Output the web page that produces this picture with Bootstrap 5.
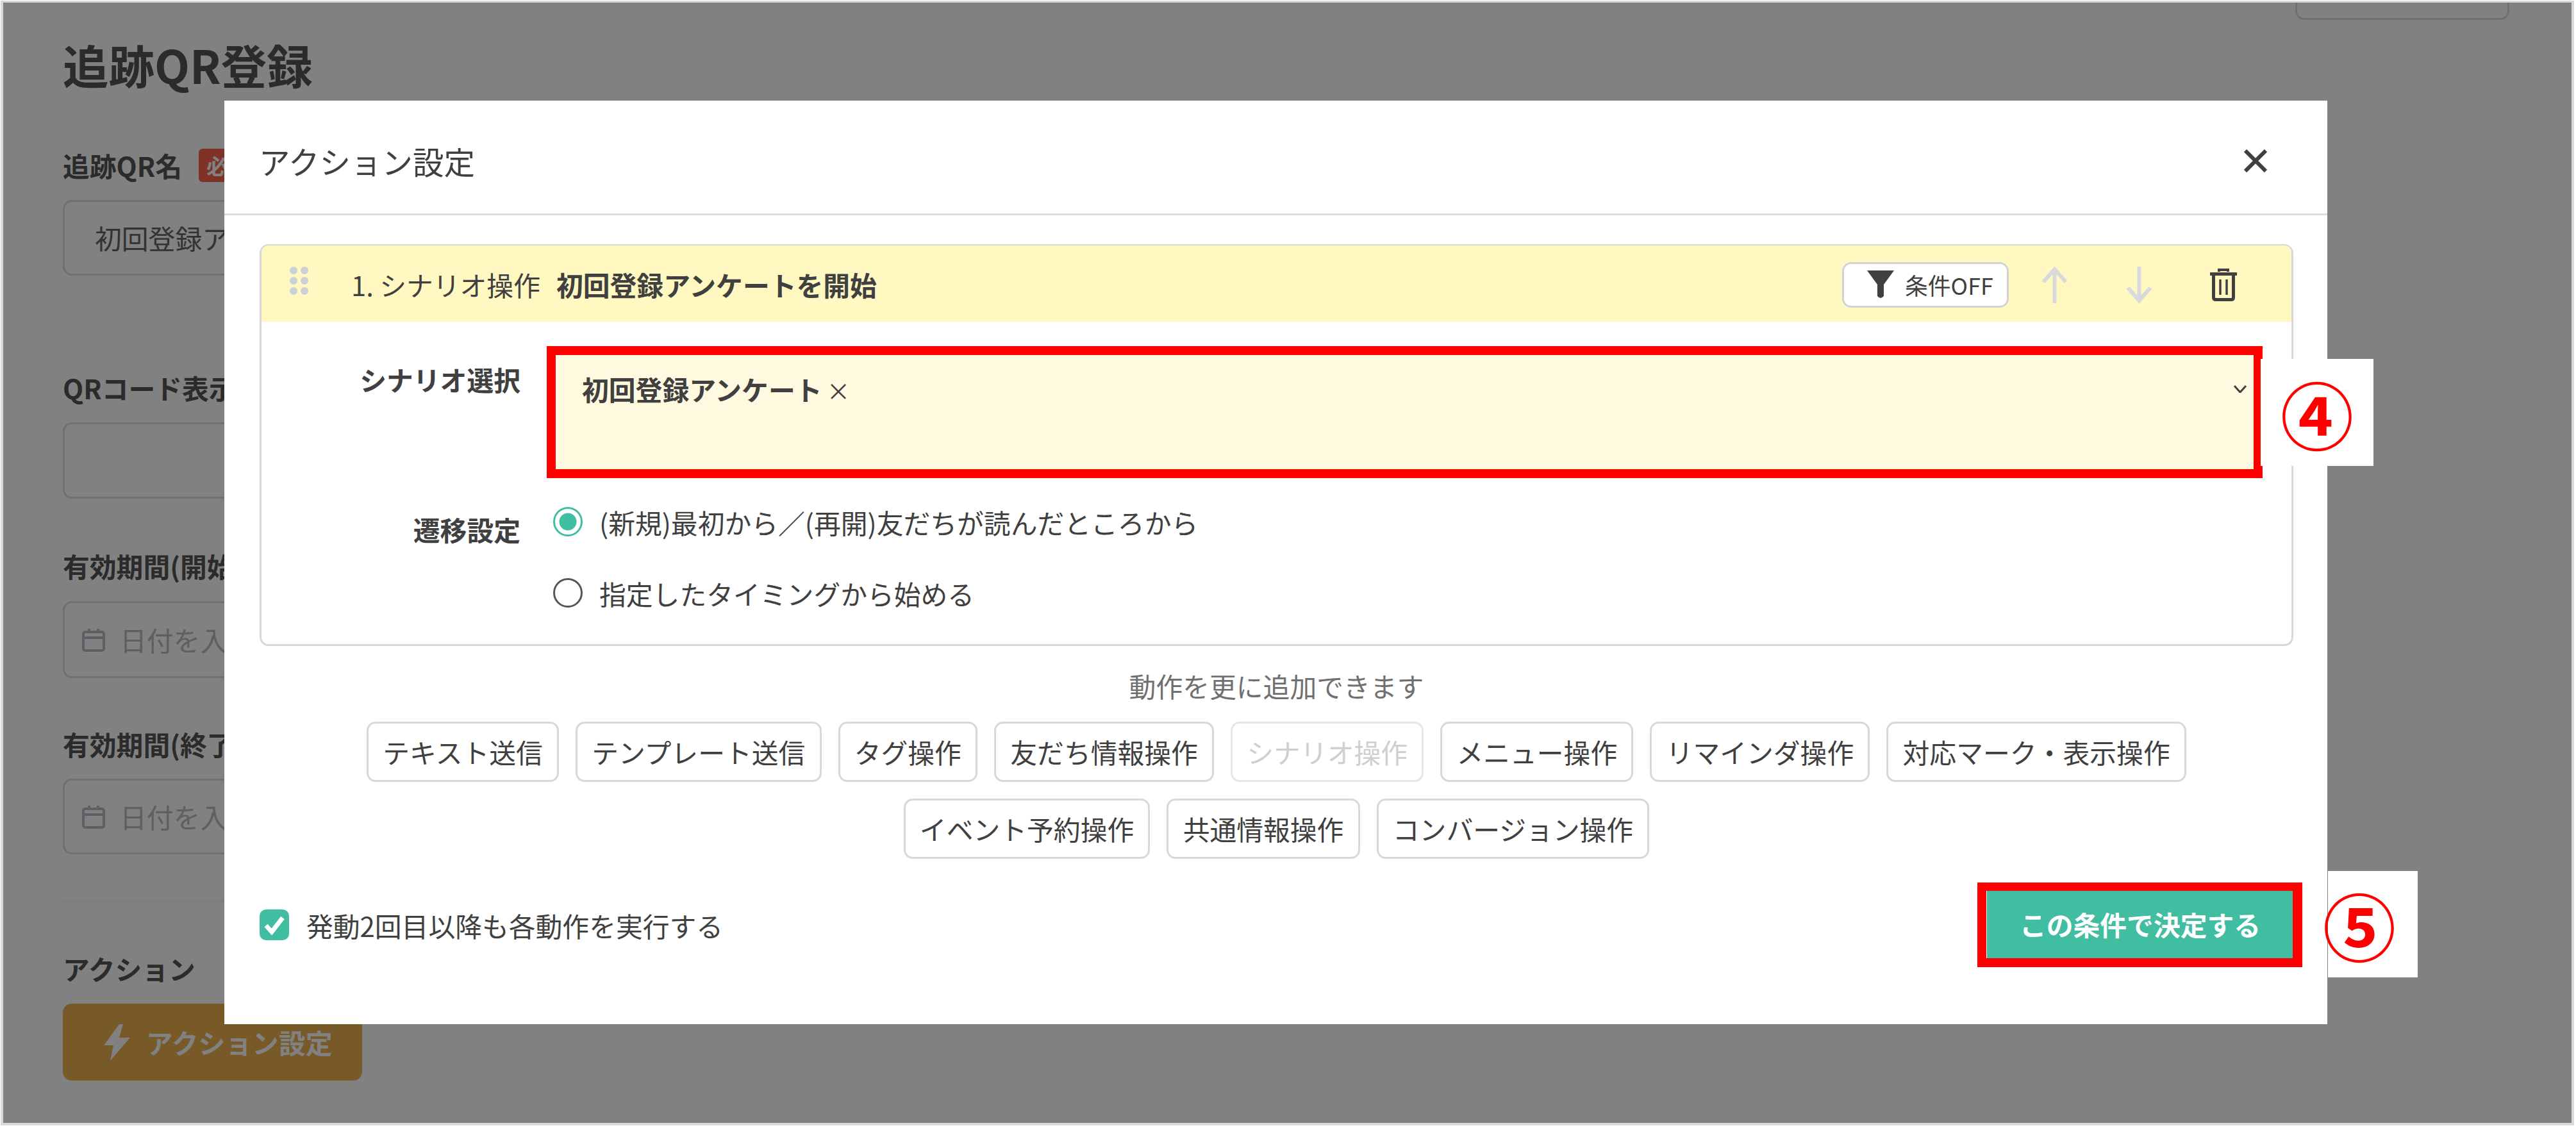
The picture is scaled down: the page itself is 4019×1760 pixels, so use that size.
<!DOCTYPE html>
<html lang="ja">
<head>
<meta charset="utf-8">
<title>追跡QR登録</title>
<link href="https://cdn.jsdelivr.net/npm/bootstrap@5.3.0/dist/css/bootstrap.min.css" rel="stylesheet">
<style>
html,body{margin:0;background:#fff;}
body{font-family:"Noto Sans CJK JP","Noto Sans",sans-serif;font-size:41.8px;line-height:62px;color:#404040;width:4019px;height:1760px;overflow:hidden;}
.shot-frame{position:relative;margin:1px 0 0 1px;width:4015px;height:1755px;border:solid #d9d9d9;border-width:3px 4px 4px 4px;overflow:hidden;background:#fff;}
.page-flow{padding:0 0 0 93px;color:#555;}
.top-ghost{display:block;margin:-90px 97px 0 auto;width:334px;height:117px;border:3px solid #dedede;border-radius:14px;background:#fff;}
.page-title{font-size:71.5px;line-height:85px;font-weight:700;margin:27px 0 84px;color:#555;}
.field-label{font-weight:700;font-size:41.8px;line-height:62px;margin:0 0 23px;color:#555;display:flex;align-items:center;white-space:nowrap;}
.label-loose{margin-bottom:24px;}
.need-tag{display:inline-block;background:#fb634b;color:#fff;font-size:33px;line-height:52px;height:52px;padding:0 12px;border-radius:6px;margin-left:26px;font-weight:700;}
.ghost-input{width:2000px;height:118px;border:3px solid #dedede;border-radius:14px;padding:0 47px;display:flex;align-items:center;gap:23px;color:#666;background:#fff;}
.ghost-hint{color:#b6bcc4;padding-left:27px;}
.ghost-name{margin-bottom:144px;}
.ghost-code{height:119px;margin-bottom:74px;}
.ghost-start{height:120px;margin-bottom:72px;}
.ghost-end{margin-bottom:73px;}
.ghost-rule{width:2000px;height:2px;background:#f8f8f8;margin:0 0 72px;}
.action-open{width:467px;height:120px;background:#eeb24f;border-radius:14px;color:#fff;font-weight:700;display:flex;align-items:center;padding:0 0 0 64px;gap:25px;}
.dim-layer{position:absolute;inset:0;background:#000;opacity:.495;z-index:10;}
.sheet{position:absolute;left:345px;top:153px;width:3281px;height:1441px;background:#fff;border:0;border-radius:0;z-index:20;}
.sheet .modal-header{height:179px;padding:12px 94px 0 54px;border-bottom:3px solid #dedede;border-radius:0;}
.sheet-title{font-size:48.5px;line-height:70px;font-weight:400;margin:0;color:#404040;}
.x-btn{background:none;border:0;padding:0;line-height:0;}
.sheet .modal-body{padding:45px 53px 0 55px;}
.act-card{border:3px solid #d8d8d8;border-radius:14px;height:627px;}
.act-head{flex:none;height:119px;background:#fff8c0;border:0;padding:3px 85px 0 44px;display:flex;align-items:center;border-radius:11px 11px 0 0 !important;margin-top:-1px;}
.drag-ico{margin-top:-12px;}
.act-no{margin-left:67px;}
.act-name{margin-left:25px;font-weight:700;}
.cond-chip{width:260px;height:71px;background:#fff;border:3px solid #d3d3d5;border-radius:14px;display:flex;align-items:center;justify-content:flex-start;gap:17px;font-size:35.8px;line-height:50px;color:#404040;padding:0 0 0 36px;margin:0 0 0 auto;}
.up-ico{margin-left:52px;}
.down-ico{margin-left:93px;}
.bin-ico{margin-left:91px;}
.act-body{padding:53px 59px 0 0;}
.set-line{display:flex;}
.set-key{width:404px;flex:none;text-align:right;font-weight:700;}
.set-key-a{padding-top:6px;}
.set-key-b{padding-top:9px;margin-top:53px;}
.pick-box{margin-left:56px;flex:1;height:178px;background:#fffadf;padding:21px 11px 0 40px;display:flex;justify-content:space-between;font-weight:700;}
.pick-x{font-weight:400;font-size:37px;margin-left:7px;}
.pick-chev{margin-top:25px;}
.radio-stack{margin:51px 0 0 51px;display:flex;flex-direction:column;gap:49px;}
.radio-line{display:flex;align-items:center;gap:26px;margin:0;padding:0;min-height:0;}
.form-check-input.radio-ico{width:46px;height:46px;margin:-3px 0 0;flex:none;border:3px solid #555;float:none;}
.form-check-input.radio-ico:checked{border-color:#41bda2;background-color:#fff;background-image:radial-gradient(circle closest-side,#41bda2 13px,transparent 14px);background-size:auto;}
.more-note{text-align:center;color:#707070;margin-top:31px;}
.add-wrap{gap:26px;margin-top:25px;}
.add-btn{height:94px;padding:0 22.200px;border:3px solid #d8d8d8;border-radius:14px;background:#fff;color:#404040;font-size:41.8px;line-height:62px;}
.add-btn:disabled{color:#cfcfd2;border-color:#e6e6e6;background:#fff;opacity:1;}
.sheet-foot{margin-top:50px;}
.repeat-check{display:flex;align-items:center;gap:27px;margin:0;padding:3px 0 0;min-height:0;}
.form-check-input.tick-ico{width:46px;height:48px;margin:-3px 0 0;float:none;flex:none;border:0;border-radius:10px;background-color:#41bda2;background-size:32px;background-image:url("data:image/svg+xml,%3Csvg xmlns='http://www.w3.org/2000/svg' viewBox='0 0 32 32'%3E%3Cpath d='M3 17l9 10L29 5' fill='none' stroke='%23fff' stroke-width='7'/%3E%3C/svg%3E");}
.decide-btn{width:478px;height:105px;background:#41bda2;border:0;border-radius:0;color:#fff;font-weight:700;font-size:41.8px;padding:0;}
.mark-box{position:absolute;border:14px solid #f00;z-index:30;}
.mark-pick{left:848px;top:536px;width:2677px;height:206px;}
.mark-decide{left:3080px;top:1373px;width:507px;height:132px;border-width:13px 15px 14px 14px;}
.mark-tag{position:absolute;background:#fff;z-index:31;display:flex;align-items:center;justify-content:center;color:#f00;font-family:"Noto Sans CJK JP",sans-serif;font-size:114px;line-height:1;font-weight:700;}
.tag-four{left:3522px;top:556px;width:176px;height:167px;}
.tag-five{left:3627px;top:1355px;width:140px;height:166px;padding-right:42px;}
</style>
</head>
<body>
<div class="shot-frame">
  <div class="page-flow">
    <button class="top-ghost" type="button" aria-label="メニュー"></button>
    <h1 class="page-title">追跡QR登録</h1>
    <div class="field-label">追跡QR名<span class="need-tag">必須</span></div>
    <div class="ghost-input ghost-name">初回登録アンケート</div>
    <div class="field-label">QRコード表示名</div>
    <div class="ghost-input ghost-code"></div>
    <div class="field-label label-loose">有効期間(開始)</div>
    <div class="ghost-input ghost-hint ghost-start">
      <svg width="36" height="37" viewBox="0 0 36 37" fill="none" stroke="#b6bcc4" stroke-width="4"><rect x="2" y="6" width="32" height="29" rx="3"/><path d="M2 15H34M11 1V8M25 1V8"/></svg>日付を入力
    </div>
    <div class="field-label">有効期間(終了)</div>
    <div class="ghost-input ghost-hint ghost-end">
      <svg width="36" height="37" viewBox="0 0 36 37" fill="none" stroke="#b6bcc4" stroke-width="4"><rect x="2" y="6" width="32" height="29" rx="3"/><path d="M2 15H34M11 1V8M25 1V8"/></svg>日付を入力
    </div>
    <div class="ghost-rule"></div>
    <div class="field-label label-loose">アクション</div>
    <div class="action-open">
      <svg width="41" height="57" viewBox="0 0 41 57" fill="#fff"><path d="M24 0L0 33H15L10 57L41 21H24L30 0Z"/></svg>アクション設定
    </div>
  </div>
  <div class="dim-layer"></div>

  <div class="modal-content sheet">
    <div class="modal-header">
      <h5 class="sheet-title">アクション設定</h5>
      <button type="button" class="x-btn ms-auto" aria-label="Close">
        <svg width="36" height="36" viewBox="0 0 36 36" stroke="#404040" stroke-width="6" fill="none"><path d="M2 2L34 34M34 2L2 34"/></svg>
      </button>
    </div>
    <div class="modal-body">
      <div class="card act-card">
        <div class="card-header act-head">
          <svg class="drag-ico" width="29" height="44" viewBox="0 0 29 44" fill="#ced0d8"><circle cx="6" cy="6" r="6"/><circle cx="23" cy="6" r="6"/><circle cx="6" cy="22" r="6"/><circle cx="23" cy="22" r="6"/><circle cx="6" cy="38" r="6"/><circle cx="23" cy="38" r="6"/></svg>
          <span class="act-no">1. シナリオ操作</span>
          <span class="act-name">初回登録アンケートを開始</span>
          <button type="button" class="cond-chip">
            <svg width="42" height="44" viewBox="0 0 42 44" fill="#404040"><path d="M0 0H42L26 22V40Q21 46 16 40V22Z"/></svg>条件OFF
          </button>
          <svg class="up-ico" width="39" height="57" viewBox="0 0 39 57" fill="none" stroke="#d9d9dc" stroke-width="6"><path d="M19.5 57V4M2 24L19.5 4L37 24"/></svg>
          <svg class="down-ico" width="39" height="57" viewBox="0 0 39 57" fill="none" stroke="#d9d9dc" stroke-width="6"><path d="M19.5 0V53M2 33L19.5 53L37 33"/></svg>
          <svg class="bin-ico" width="42" height="51" viewBox="0 0 42 51" fill="none" stroke="#404040"><path d="M0 8.5H42" stroke-width="5"/><path d="M14 5V2H28V5" stroke-width="4"/><path d="M5.5 10V45Q5.500 48.500 9 48.500H33Q36.500 48.500 36.500 45V10" stroke-width="5"/><path d="M16 17V41M26 17V41" stroke-width="3.500"/></svg>
        </div>
        <div class="card-body act-body">
          <div class="set-line">
            <div class="set-key set-key-a">シナリオ選択</div>
            <div class="pick-box">
              <span>初回登録アンケート<span class="pick-x">×</span></span>
              <svg class="pick-chev" width="20" height="12" viewBox="0 0 20 12" fill="none" stroke="#404040" stroke-width="3"><path d="M1 1L10 11L19 1"/></svg>
            </div>
          </div>
          <div class="set-line">
            <div class="set-key set-key-b">遷移設定</div>
            <div class="radio-stack">
              <label class="form-check radio-line"><input class="form-check-input radio-ico" type="radio" name="flow" checked>(新規)最初から／(再開)友だちが読んだところから</label>
              <label class="form-check radio-line"><input class="form-check-input radio-ico" type="radio" name="flow">指定したタイミングから始める</label>
            </div>
          </div>
        </div>
      </div>
      <div class="more-note">動作を更に追加できます</div>
      <div class="d-flex flex-wrap justify-content-center add-wrap">
        <button type="button" class="btn add-btn">テキスト送信</button>
        <button type="button" class="btn add-btn">テンプレート送信</button>
        <button type="button" class="btn add-btn">タグ操作</button>
        <button type="button" class="btn add-btn">友だち情報操作</button>
        <button type="button" class="btn add-btn" disabled>シナリオ操作</button>
        <button type="button" class="btn add-btn">メニュー操作</button>
        <button type="button" class="btn add-btn">リマインダ操作</button>
        <button type="button" class="btn add-btn">対応マーク・表示操作</button>
        <button type="button" class="btn add-btn">イベント予約操作</button>
        <button type="button" class="btn add-btn">共通情報操作</button>
        <button type="button" class="btn add-btn">コンバージョン操作</button>
      </div>
      <div class="d-flex justify-content-between align-items-center sheet-foot">
        <label class="form-check repeat-check"><input class="form-check-input tick-ico" type="checkbox" checked>発動2回目以降も各動作を実行する</label>
        <button type="button" class="btn decide-btn">この条件で決定する</button>
      </div>
    </div>
  </div>

  <div class="mark-box mark-pick"></div>
  <div class="mark-tag tag-four">④</div>
  <div class="mark-box mark-decide"></div>
  <div class="mark-tag tag-five">⑤</div>
</div>
<script src="https://cdn.jsdelivr.net/npm/bootstrap@5.3.0/dist/js/bootstrap.bundle.min.js"></script>
</body>
</html>
